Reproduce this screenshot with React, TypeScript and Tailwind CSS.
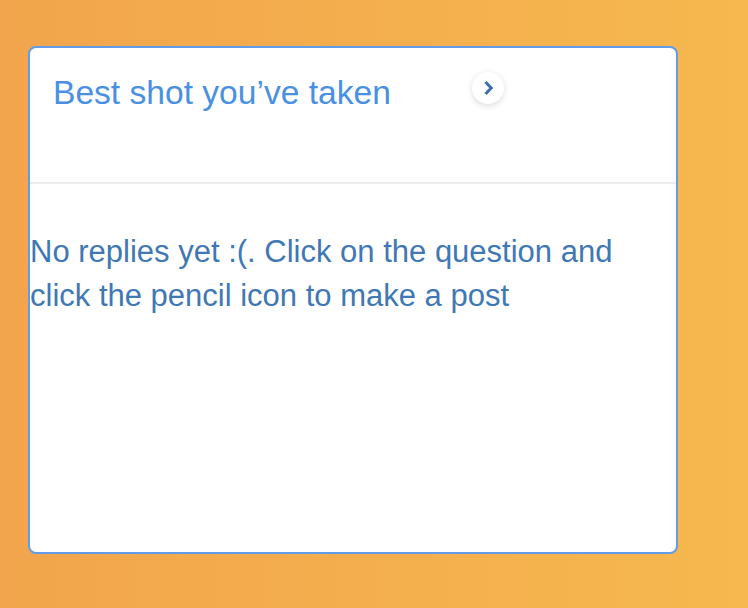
import React from 'react'

const ReplyCard: React.FC = () => {
    return (
        <div className="flex flex-col w-[650px] h-[508px] bg-white border-2 border-[#609cea] rounded-[8px] overflow-hidden">
            <div className="flex items-start h-[136px] border-b-2 border-[#ececec] pl-[23px] pt-[26px]">
                <h1 className="text-[33.6px] leading-[38px] text-[#4a90e2] font-normal">Best shot you’ve taken</h1>
                <button className="flex items-center justify-center w-[32px] h-[32px] ml-[81px] mt-[-2px] rounded-full bg-white shadow-[0_2px_6px_rgba(0,0,0,0.14)]">
                    <svg width="12" height="16" viewBox="0 0 12 16" fill="none">
                        <path d="M3.5 2 L9.2 8 L3.5 14" stroke="#3b6fb0" strokeWidth="3" />
                    </svg>
                </button>
            </div>
            <p className="mt-[46px] text-[31px] leading-[44px] text-[#3f78b4]">
                No replies yet :(. Click on the question and click the pencil icon to make a post
            </p>
        </div>
    );
};

export default function App() {
    return (
        <div
            className="w-full h-[608px] bg-linear-to-r from-[#f2a54c] to-[#f6b84f] pt-[46px] pl-[28px]"
            style={{ fontFamily: '"Liberation Sans", Arial, sans-serif' }}
        >
            <ReplyCard />
        </div>
    );
}
